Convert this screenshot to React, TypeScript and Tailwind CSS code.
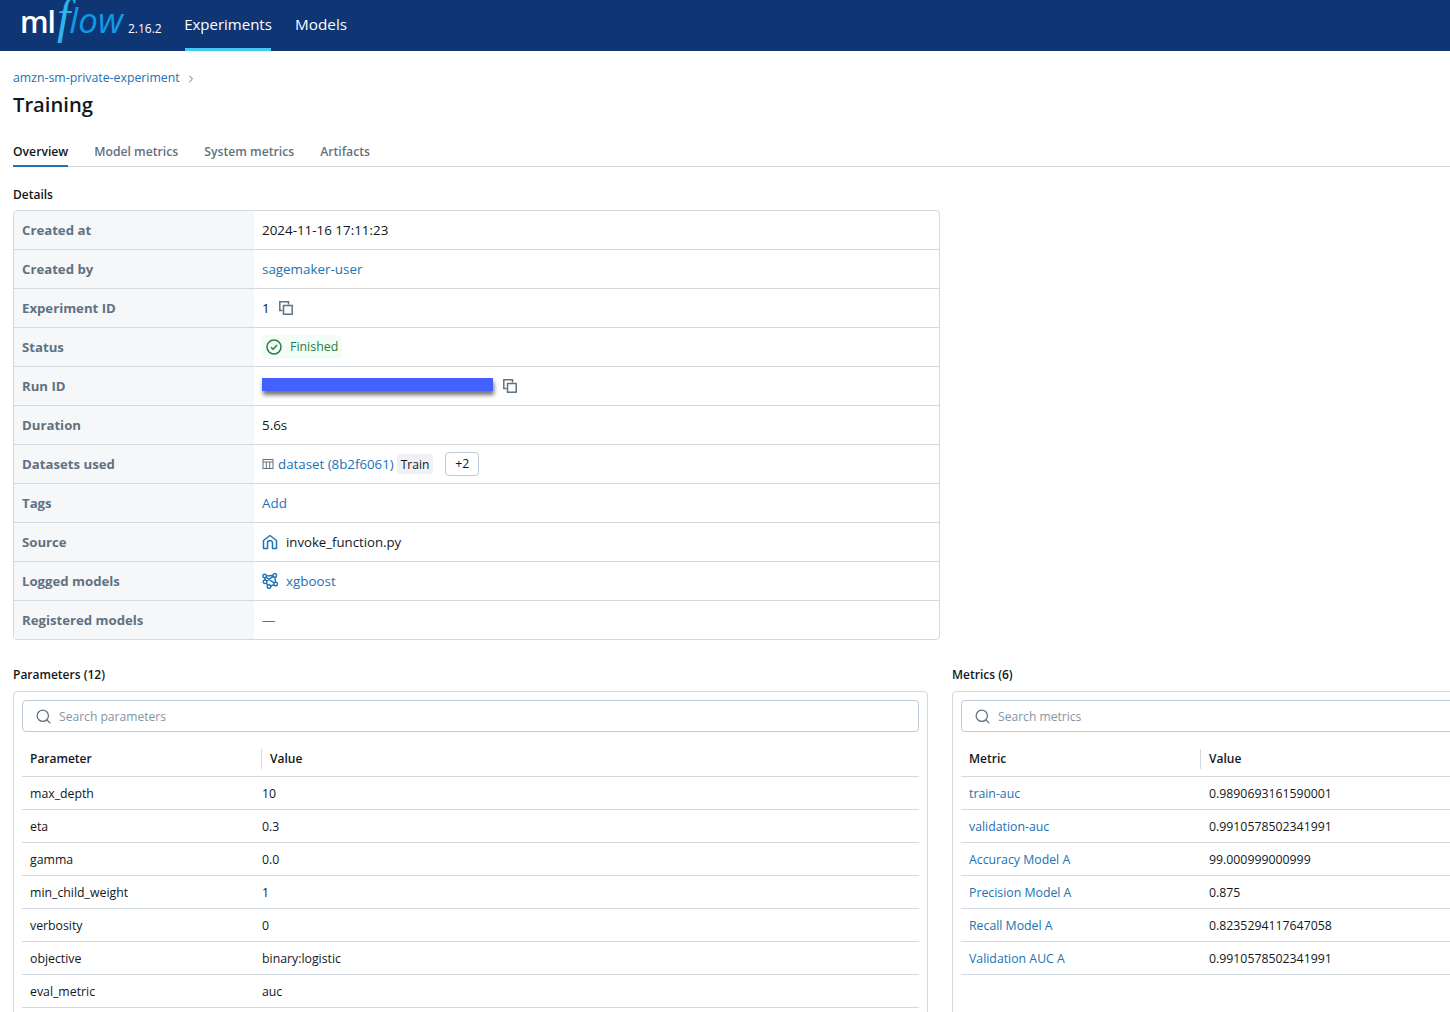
import React from 'react';
import { ChevronRight, Search } from 'lucide-react';

const font = { fontFamily: '"Open Sans", "Noto Sans", sans-serif' };

const CopyIcon = () => (
  <svg width="14" height="14" viewBox="0 0 14 14" fill="none" stroke="#5f7281" strokeWidth="1.500">
    <path d="M3.500 9.500H.8V.8h8.700v2.700" />
    <rect x="4.500" y="4.500" width="8.700" height="8.700" />
  </svg>
);

const details = [
  'Created at', 'Created by', 'Experiment ID', 'Status', 'Run ID', 'Duration',
  'Datasets used', 'Tags', 'Source', 'Logged models', 'Registered models',
];

const params = [
  ['max_depth', '10'], ['eta', '0.3'], ['gamma', '0.0'], ['min_child_weight', '1'],
  ['verbosity', '0'], ['objective', 'binary:logistic'], ['eval_metric', 'auc'],
];

const metrics = [
  ['train-auc', '0.9890693161590001'], ['validation-auc', '0.9910578502341991'],
  ['Accuracy Model A', '99.000999000999'], ['Precision Model A', '0.875'],
  ['Recall Model A', '0.8235294117647058'], ['Validation AUC A', '0.9910578502341991'],
];

const DetailValue = ({ label }: { label: string }) => {
  switch (label) {
    case 'Created at':
      return <span>2024-11-16 17:11:23</span>;
    case 'Created by':
      return <a className="text-[#2272b4]">sagemaker-user</a>;
    case 'Experiment ID':
      return (
        <div className="flex items-center gap-[9px]">
          <span>1</span>
          <CopyIcon />
        </div>
      );
    case 'Status':
      return (
        <div className="flex h-6 items-center gap-[8px] rounded bg-[#f3fcf6] px-1 text-[12.400px] text-[#277c43]">
          <svg width="16" height="16" viewBox="0 0 16 16" fill="none" stroke="#277c43" strokeWidth="1.500">
            <circle cx="8" cy="8" r="7" />
            <path d="M5 8.300l2.100 2L11 6" />
          </svg>
          <span className="pt-px">Finished</span>
        </div>
      );
    case 'Run ID':
      return (
        <div className="flex items-center gap-[10px]">
          <div className="-mt-[4px] h-[13px] w-[231px] bg-[#4361ff] shadow-[1px_4px_4px_rgba(0,0,0,0.55)]" />
          <CopyIcon />
        </div>
      );
    case 'Duration':
      return <span>5.6s</span>;
    case 'Datasets used':
      return (
        <div className="flex items-center">
          <svg width="12" height="12" viewBox="0 0 12 12" fill="none" stroke="#5f7281" strokeWidth="1" className="mr-1">
            <rect x="1" y="1.500" width="10" height="9" />
            <path d="M1 4h10M4.300 4v6.500M7.700 4v6.500" />
          </svg>
          <a className="pt-px text-[13.300px] text-[#2272b4]">dataset (8b2f6061)</a>
          <span className="ml-[3px] flex h-5 items-center rounded bg-[#eef0f3] px-1 pt-px text-[12px]">Train</span>
          <button className="ml-3 h-6 w-[34px] rounded border border-[#c0cdd8] pt-px text-[12.300px]">+2</button>
        </div>
      );
    case 'Tags':
      return <a className="text-[#2272b4]">Add</a>;
    case 'Source':
      return (
        <div className="flex items-center gap-2">
          <svg width="16" height="16" viewBox="0 0 16 16" fill="none" stroke="#2272b4" strokeWidth="1.500">
            <path d="M1.500 14.500V6.500L8 1.500l6.500 5v8h-4V9a2.500 2.500 0 0 0-5 0v5.500z" strokeLinejoin="round" />
          </svg>
          <span className="pt-px text-[13.200px]">invoke_function.py</span>
        </div>
      );
    case 'Logged models':
      return (
        <div className="flex items-center gap-2 text-[#2272b4]">
          <svg width="16" height="16" viewBox="0 0 16 16" fill="none" stroke="#2272b4" strokeWidth="1.400">
            <circle cx="2.600" cy="3" r="1.800" />
            <circle cx="12.800" cy="2.400" r="1.800" />
            <circle cx="3" cy="8.800" r="1.800" />
            <circle cx="7" cy="13.600" r="1.800" />
            <circle cx="13.600" cy="11" r="1.800" />
            <path d="M4.300 2.900l6.700-.4M4.600 8l6.800-4.600M2.700 4.800l.2 2.200M4.200 10.200l1.800 1.900M11.900 11.700l-3.100 1.300M12.900 4.200l.6 5M4 4.200l8 5.700" />
          </svg>
          <a>xgboost</a>
        </div>
      );
    default:
      return <span className="text-[#5f7281]">—</span>;
  }
};

const Panel = ({
  title, placeholder, col, rows, link, width,
}: {
  title: string; placeholder: string; col: string; rows: string[][]; link?: boolean; width: string;
}) => (
  <div className={`shrink-0 ${width}`}>
    <h3 className="mb-[8px] h-[16px] text-[12px] leading-[16px] font-semibold text-[#11171c]">{title}</h3>
    <div className="h-[400px] rounded border border-[#d1d9e1] p-2 text-[12.300px]">
      <div className="flex h-8 items-center gap-[7px] rounded border border-[#c0cdd8] pl-3">
        <Search size={17} color="#5f7281" strokeWidth={1.800} />
        <span className="pt-[2px] text-[12.100px] text-[#8396a5]">{placeholder}</span>
      </div>
      <div className="mt-[10px] flex h-[35px] items-center border-b border-[#d1d9e1] text-[12px] font-semibold">
        <div className="w-[239px] pl-2">{col}</div>
        <div className="flex h-5 items-center border-l border-[#d1d9e1] pl-2">Value</div>
      </div>
      {rows.map(([k, v]) => (
        <div key={k} className="flex h-[33px] items-center border-b border-[#d1d9e1] pt-[3px]">
          <div className={`w-[240px] pl-2 ${link ? 'text-[#2272b4]' : ''}`}>{k}</div>
          <div className={link ? 'pl-2' : ''}>{v}</div>
        </div>
      ))}
    </div>
  </div>
);

export default function App() {
  return (
    <div className="h-[1012px] w-[1450px] overflow-hidden bg-white text-[13px] text-[#11171c]" style={font}>
      <header className="flex h-[51px] bg-[#0e3574] text-white">
        <div className="flex w-[185px] items-baseline pl-[20px] pt-[1px]">
          <span className="text-[30px] leading-[31px] font-semibold tracking-[-1px]">ml</span>
          <span className="ml-[2px] text-[48px] leading-[31px] text-[#2fb5ea] italic" style={{ fontFamily: '"Liberation Serif", serif' }}>f</span>
          <span className="-ml-[1px] text-[35px] leading-[31px] font-medium text-[#0f9be4] italic">low</span>
          <span className="ml-[5px] text-[12px] leading-[16px]">2.16.2</span>
        </div>
        <nav className="flex gap-6 text-[15px]">
          <a className="flex h-[51px] w-[86px] items-center justify-center whitespace-nowrap border-b-[3px] border-[#43c9ed] pt-[1px]">Experiments</a>
          <a className="flex h-[51px] items-center pb-[2px] text-[15.300px]">Models</a>
        </nav>
      </header>

      <main className="pl-[13px]">
        <div className="mt-[19px] flex h-[16px] items-center gap-[5px] pt-[1px] text-[12.300px] text-[#2272b4]">
          <a>amzn-sm-private-experiment</a>
          <ChevronRight size={12} color="#5f7281" />
        </div>
        <h1 className="mt-[4px] h-[28px] text-[20.200px] leading-[28px] font-semibold">Training</h1>

        <div className="mt-[18px] flex h-[31px] gap-[26px] border-b border-[#d1d9e1] text-[12.200px] font-semibold text-[#5f7281]">
          <a className="-mb-px h-[31px] border-b-2 border-[#2272b4] pt-[7px] text-[#11171c]">Overview</a>
          <a className="pt-[7px]">Model metrics</a>
          <a className="pt-[7px]">System metrics</a>
          <a className="pt-[7px]">Artifacts</a>
        </div>

        <h3 className="mt-[20px] h-[16px] text-[12px] leading-[16px] font-semibold">Details</h3>
        <div className="mt-[7px] w-[927px] overflow-hidden rounded border border-[#d1d9e1] text-[13.400px]">
          {details.map((label, i) => (
            <div key={label} className={i < details.length - 1 ? 'flex h-[39px] border-b border-[#d1d9e1]' : 'flex h-[38px]'}>
              <div className="flex w-[240px] items-center bg-[#f6f7f9] pt-px pl-2 text-[13.200px] font-bold text-[#5f7281]">{label}</div>
              <div className="flex items-center pl-2">
                <DetailValue label={label} />
              </div>
            </div>
          ))}
        </div>

        <div className="mt-[27px] flex gap-[24px]">
          <Panel width="w-[915px]" title="Parameters (12)" placeholder="Search parameters" col="Parameter" rows={params} />
          <Panel width="w-[915px]" title="Metrics (6)" placeholder="Search metrics" col="Metric" rows={metrics} link />
        </div>
      </main>
    </div>
  );
}
